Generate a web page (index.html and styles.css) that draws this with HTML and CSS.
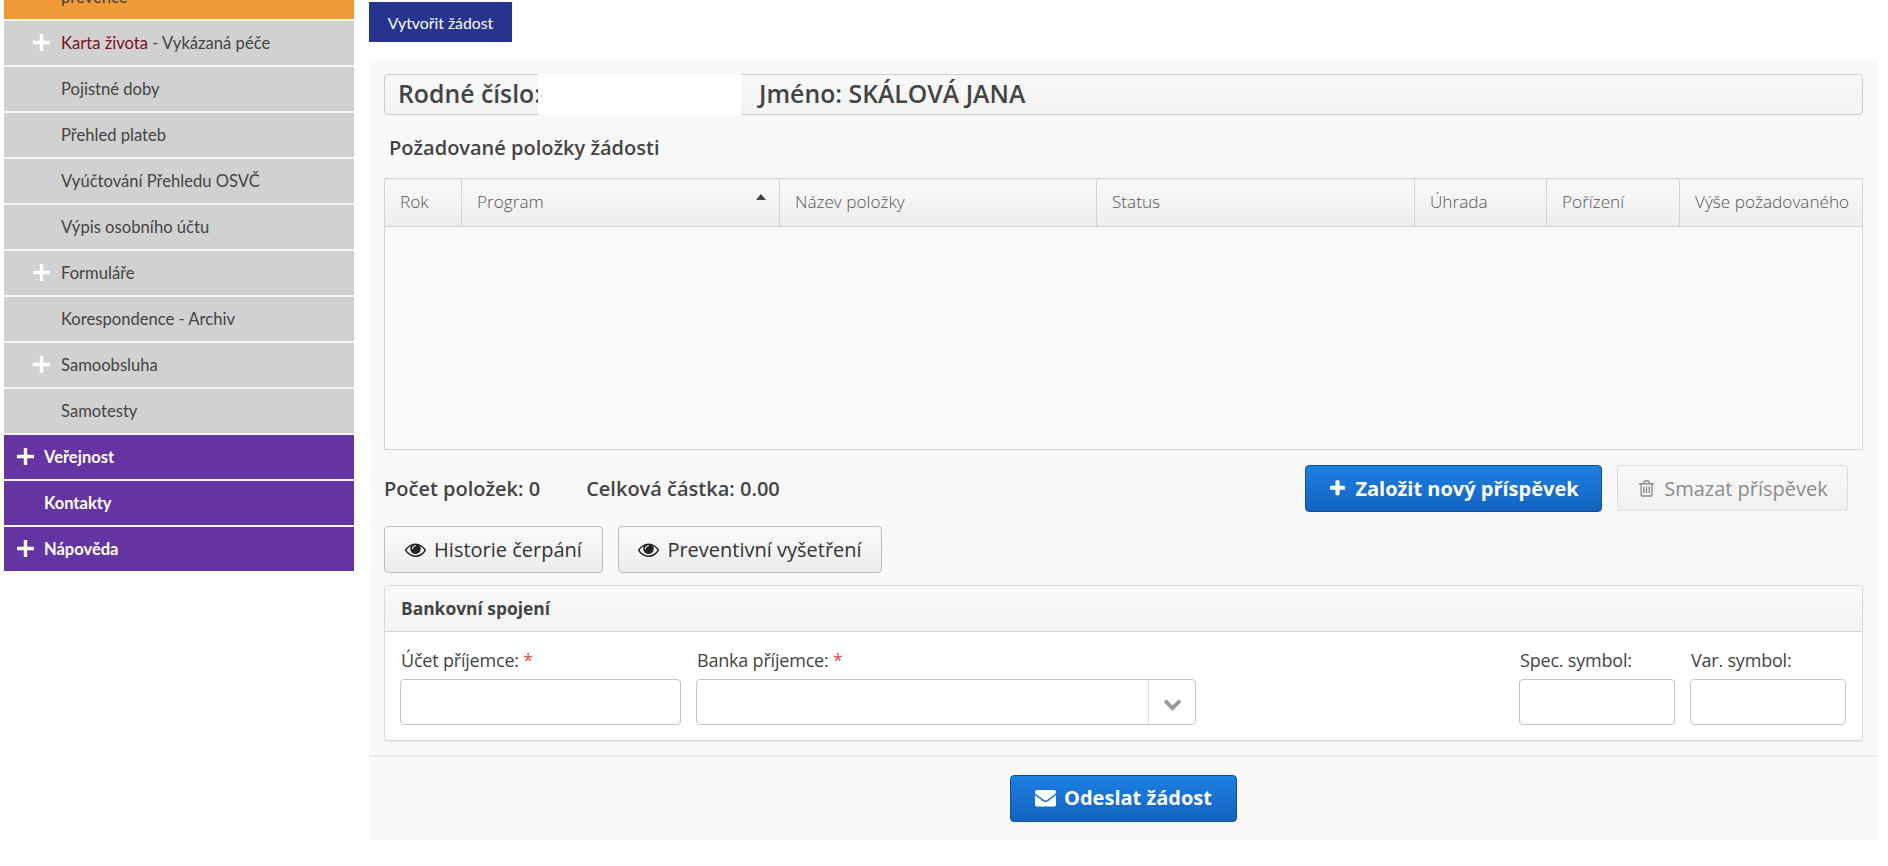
FILE: index.html
```html
<!DOCTYPE html>
<html lang="cs">
<head>
<meta charset="utf-8">
<title>Žádost</title>
<link rel="stylesheet" href="styles.css">
</head>
<body>
<div class="page">
  <nav class="side">
    <a class="item orange"><span class="label">prevence</span></a>
    <a class="item"><svg class="plus" viewBox="0 0 16 16"><path d="M6.400 0h3.200v6.400H16v3.200H9.600V16H6.400V9.600H0V6.400h6.400z"/></svg><span class="label"><span class="maroon">Karta života</span> - Vykázaná péče</span></a>
    <a class="item"><span class="label">Pojistné doby</span></a>
    <a class="item"><span class="label">Přehled plateb</span></a>
    <a class="item"><span class="label">Vyúčtování Přehledu OSVČ</span></a>
    <a class="item"><span class="label">Výpis osobního účtu</span></a>
    <a class="item"><svg class="plus" viewBox="0 0 16 16"><path d="M6.400 0h3.200v6.400H16v3.200H9.600V16H6.400V9.600H0V6.400h6.400z"/></svg><span class="label">Formuláře</span></a>
    <a class="item"><span class="label">Korespondence - Archiv</span></a>
    <a class="item"><svg class="plus" viewBox="0 0 16 16"><path d="M6.400 0h3.200v6.400H16v3.200H9.600V16H6.400V9.600H0V6.400h6.400z"/></svg><span class="label">Samoobsluha</span></a>
    <a class="item"><span class="label">Samotesty</span></a>
    <a class="item top"><svg class="plus" viewBox="0 0 16 16"><path d="M6.400 0h3.200v6.400H16v3.200H9.600V16H6.400V9.600H0V6.400h6.400z"/></svg><span class="label">Veřejnost</span></a>
    <a class="item top"><span class="label">Kontakty</span></a>
    <a class="item top"><svg class="plus" viewBox="0 0 16 16"><path d="M6.400 0h3.200v6.400H16v3.200H9.600V16H6.400V9.600H0V6.400h6.400z"/></svg><span class="label">Nápověda</span></a>
  </nav>
  <main class="main">
    <button class="create">Vytvořit žádost</button>
    <section class="panel">
      <div class="content">
        <div class="idbar">
          <span class="rc">Rodné číslo:</span>
          <span class="redact"></span>
          <span class="name">Jméno: SKÁLOVÁ JANA</span>
        </div>
        <h2 class="subtitle">Požadované položky žádosti</h2>
        <table class="grid">
          <colgroup><col class="c-rok"><col class="c-prog"><col class="c-naz"><col class="c-stat"><col class="c-uhr"><col class="c-por"><col class="c-vys"></colgroup>
          <thead>
            <tr>
              <th>Rok</th>
              <th class="sorted">Program<span class="sort"></span></th>
              <th>Název položky</th>
              <th>Status</th>
              <th>Úhrada</th>
              <th>Pořízení</th>
              <th>Výše požadovaného</th>
            </tr>
          </thead>
          <tbody><tr><td colspan="7"></td></tr></tbody>
        </table>
        <div class="summary">
          <div class="stats"><span>Počet položek: 0</span><span>Celková částka: 0.00</span></div>
          <div class="actions">
            <button class="btn primary big">
              <svg class="ic" viewBox="0 0 1792 1792"><path d="M1600 736v192q0 40-28 68t-68 28h-416v416q0 40-28 68t-68 28h-192q-40 0-68-28t-28-68v-416h-416q-40 0-68-28t-28-68v-192q0-40 28-68t68-28h416v-416q0-40 28-68t68-28h192q40 0 68 28t28 68v416h416q40 0 68 28t28 68z"/></svg>
              Založit nový příspěvek
            </button>
            <button class="btn disabled">
              <svg class="ic" viewBox="0 0 1792 1792"><path d="M704 736v576q0 14-9 23t-23 9h-64q-14 0-23-9t-9-23v-576q0-14 9-23t23-9h64q14 0 23 9t9 23zm256 0v576q0 14-9 23t-23 9h-64q-14 0-23-9t-9-23v-576q0-14 9-23t23-9h64q14 0 23 9t9 23zm256 0v576q0 14-9 23t-23 9h-64q-14 0-23-9t-9-23v-576q0-14 9-23t23-9h64q14 0 23 9t9 23zm128 724v-948h-896v948q0 22 7 40.500t14.500 27 10.500 8.500h832q3 0 10.500-8.500t14.500-27 7-40.500zm-672-1076h448l-48-117q-7-9-17-11h-317q-10 2-17 11zm928 32v64q0 14-9 23t-23 9h-96v948q0 83-47 143.500t-113 60.500h-832q-66 0-113-58.500t-47-141.500v-952h-96q-14 0-23-9t-9-23v-64q0-14 9-23t23-9h309l70-167q15-37 54-63t79-26h320q40 0 79 26t54 63l70 167h309q14 0 23 9t9 23z"/></svg>
              Smazat příspěvek
            </button>
          </div>
        </div>
        <div class="history">
          <button class="btn plain">
            <svg class="ic eye" viewBox="0 0 1792 1792"><path d="M1664 960q-152-236-381-353 61 104 61 225 0 185-131.500 316.500t-316.500 131.500-316.500-131.500-131.500-316.500q0-121 61-225-229 117-381 353 133 205 333.500 326.500t434.500 121.500 434.500-121.500 333.500-326.500zm-720-384q0-20-14-34t-34-14q-125 0-214.500 89.500t-89.500 214.500q0 20 14 34t34 14 34-14 14-34q0-86 61-147t147-61q20 0 34-14t14-34zm848 384q0 34-20 69-140 230-376.500 368.500t-499.500 138.500-499.500-139-376.500-368q-20-35-20-69t20-69q140-229 376.500-368t499.500-139 499.500 139 376.500 368q20 35 20 69z"/></svg>
            Historie čerpání
          </button>
          <button class="btn plain">
            <svg class="ic eye" viewBox="0 0 1792 1792"><path d="M1664 960q-152-236-381-353 61 104 61 225 0 185-131.500 316.500t-316.500 131.500-316.500-131.500-131.500-316.500q0-121 61-225-229 117-381 353 133 205 333.500 326.500t434.500 121.500 434.500-121.500 333.500-326.500zm-720-384q0-20-14-34t-34-14q-125 0-214.500 89.500t-89.500 214.500q0 20 14 34t34 14 34-14 14-34q0-86 61-147t147-61q20 0 34-14t14-34zm848 384q0 34-20 69-140 230-376.500 368.500t-499.500 138.500-499.500-139-376.500-368q-20-35-20-69t20-69q140-229 376.500-368t499.500-139 499.500 139 376.500 368q20 35 20 69z"/></svg>
            Preventivní vyšetření
          </button>
        </div>
        <div class="bank">
          <div class="bank-head">Bankovní spojení</div>
          <div class="bank-body">
            <label class="field f-ucet"><span class="flabel">Účet příjemce: <b class="req">*</b></span><span class="input"></span></label>
            <label class="field f-banka"><span class="flabel">Banka příjemce: <b class="req">*</b></span>
              <span class="input select"><span class="arrow"><svg viewBox="0 0 1792 1792"><path d="M1683 808l-742 741q-19 19-45 19t-45-19l-742-741q-19-19-19-45.500t19-45.500l166-165q19-19 45-19t45 19l531 531 531-531q19-19 45-19t45 19l166 165q19 19 19 45.500t-19 45.500z"/></svg></span></span>
            </label>
            <label class="field f-sym push"><span class="flabel">Spec. symbol:</span><span class="input"></span></label>
            <label class="field f-sym"><span class="flabel">Var. symbol:</span><span class="input"></span></label>
          </div>
        </div>
      </div>
      <div class="foot">
        <button class="btn primary send">
          <svg class="ic" viewBox="0 0 1792 1792"><path d="M1792 710v794q0 66-47 113t-113 47h-1472q-66 0-113-47t-47-113v-794q44 49 101 87 362 246 497 345 57 42 92.500 65.500t94.500 48 110 24.500h2q51 0 110-24.500t94.500-48 92.500-65.500q170-123 498-345 57-39 100-87zm0-294q0 79-49 151t-122 123q-376 261-468 325-10 7-42.500 30.500t-54 38-52 32.500-57.500 27-50 9h-2q-23 0-50-9t-57.500-27-52-32.500-54-38-42.500-30.500q-91-64-262-182.500t-205-142.500q-62-42-117-115.500t-55-136.500q0-78 41.500-130t118.500-52h1472q65 0 112.500 47t47.500 113z"/></svg>
          Odeslat žádost
        </button>
      </div>
    </section>
  </main>
</div>
</body>
</html>
```
FILE: styles.css
```css
* { box-sizing: border-box; }
html, body { margin: 0; padding: 0; background: #fff; height: 100%; overflow: hidden; }
body { font-family: "Open Sans", "Noto Sans", sans-serif; color: #444; }

.page { display: flex; align-items: flex-start; padding-left: 4px; }

/* Sidebar */
.side { width: 350px; flex: none; display: flex; flex-direction: column; margin-top: -25px; }
.item {
  height: 46px;
  display: flex;
  align-items: center;
  padding: 0 0 0 57px;
  background: #d1d1d1;
  border-bottom: 2px solid #f6f6f6;
  font-family: "Lato", sans-serif;
  font-size: 16.600px;
  color: #444;
  position: relative;
}
.item.orange { background: #f09a37; }
.item.top {
  background: #6534a3;
  color: #fff;
  font-weight: 700;
  padding-left: 40px;
  font-size: 16.500px;
}
.item.top:last-child { border-bottom: 0; height: 44px; }
.maroon { color: #7a0f20; }
.plus {
  width: 17px;
  height: 17px;
  fill: #fff;
  position: absolute;
  left: 29px;
  top: 13px;
}
.top .plus { left: 13px; }

/* Main */
.main { width: 1509px; margin-left: 15px; flex: none; padding-top: 2px; display: flex; flex-direction: column; align-items: flex-start; }
.create {
  width: 143px;
  height: 40px;
  padding: 0;
  border: 0;
  background: #27348f;
  color: #fff;
  font-family: "Lato", sans-serif;
  font-size: 15.800px;
}
.panel { width: 100%; margin-top: 17px; height: 781px; background: #f9f9f9; display: flex; flex-direction: column; }
.content { padding: 15px 15px 0; height: 698px; border-bottom: 2px solid #ececec; }

.idbar {
  height: 41px;
  border: 1px solid #ccc;
  border-radius: 4px;
  background: linear-gradient(#f9f9f9, #f3f3f3);
  display: flex;
  align-items: center;
  padding: 0 0 3px 13px;
  font-size: 24.800px;
  font-weight: 600;
  color: #444;
  position: relative;
}
.rc { width: 140px; white-space: nowrap; overflow: hidden; flex: none; }
.redact { width: 203px; height: 41px; background: #fff; flex: none; margin: -1px 0 -3px; align-self: flex-start; }
.name { margin-left: 18px; white-space: nowrap; }

.subtitle {
  margin: 0;
  height: 63px;
  padding: 1px 0 0 5px;
  display: flex;
  align-items: center;
  font-size: 20px;
  font-weight: 600;
  color: #444;
}

/* Table */
.grid { width: 1478px; height: 272px; table-layout: fixed; border-collapse: collapse; border: 1px solid #d5d5d5; background: #fafafa; }
.c-rok { width: 77px; }
.c-prog { width: 318px; }
.c-naz { width: 317px; }
.c-stat { width: 318px; }
.c-uhr { width: 132px; }
.c-por { width: 133px; }
.c-vys { width: 183px; }
.grid th {
  height: 48px;
  padding: 0 0 2px 15px;
  text-align: left;
  font-size: 17.200px;
  font-weight: 300;
  color: #555;
  white-space: nowrap;
  overflow: hidden;
  background: linear-gradient(#fafafa, #ededed);
  border-right: 1px solid #d5d5d5;
  border-bottom: 1px solid #d5d5d5;
  position: relative;
}
.grid th:last-child { border-right: 0; }
.sort {
  position: absolute;
  right: 13px;
  top: 15px;
  width: 0;
  height: 0;
  border-left: 5px solid transparent;
  border-right: 5px solid transparent;
  border-bottom: 6px solid #444;
}

/* Summary */
.summary { display: flex; justify-content: space-between; align-items: flex-start; height: 76px; padding-top: 15px; padding-right: 15px; }
.stats { display: flex; gap: 46px; height: 47px; align-items: center; font-size: 20px; font-weight: 600; color: #444; }
.actions { display: flex; gap: 15px; }

.btn {
  display: inline-flex;
  align-items: center;
  justify-content: center;
  gap: 8px;
  height: 47px;
  padding: 0;
  border-radius: 4px;
  font-family: "Open Sans", sans-serif;
  font-size: 20px;
  white-space: nowrap;
}
.ic { width: 20px; height: 20px; fill: currentColor; flex: none; }
.primary {
  background: linear-gradient(#1c80e2, #1462c0);
  border: 1px solid #10509f;
  color: #fff;
  font-weight: 700;
}
.big { width: 297px; }
.big .ic { width: 19px; height: 19px; }
.disabled {
  width: 231px;
  height: 46px;
  background: linear-gradient(#f9f9f9, #f1f1f1);
  border: 1px solid #ddd;
  color: #8b8b8b;
}
.disabled .ic { width: 19px; height: 19px; }
.plain {
  background: linear-gradient(#fbfbfb, #ececec);
  border: 1px solid #bdbdbd;
  color: #333;
}
.history { display: flex; gap: 15px; }
.history .plain:first-child { width: 219px; }
.history .plain:last-child { width: 264px; }
.eye { width: 21px; height: 21px; fill: #222; }

/* Bank */
.bank { margin-top: 12px; height: 156px; border: 1px solid #d9d9d9; border-radius: 4px; background: #fff; overflow: hidden; box-shadow: 0 1px 1px rgba(0,0,0,.08); }
.bank-head {
  height: 46px;
  padding: 0 0 2px 16px;
  display: flex;
  align-items: center;
  background: linear-gradient(#fafafa, #f3f3f3);
  border-bottom: 1px solid #d5d5d5;
  font-size: 17.400px;
  font-weight: 700;
  color: #444;
}
.bank-body { display: flex; gap: 15px; padding: 0 16px 0 15px; }
.field { display: flex; flex-direction: column; }
.flabel { height: 47px; padding: 14px 0 0 1px; font-size: 18px; line-height: 28px; color: #444; white-space: nowrap; letter-spacing: -0.2px; }
.req { color: #d9534f; font-weight: 400; font-size: 18px; }
.input { display: flex; justify-content: flex-end; height: 46px; border: 1px solid #c4c4c4; border-radius: 4px; background: #fff; }
.f-ucet { width: 281px; }
.f-banka { width: 500px; }
.f-sym { width: 156px; }
.push { margin-left: auto; }
.arrow { width: 47px; height: 100%; border-left: 1px solid #e0e0e0; display: flex; align-items: center; justify-content: center; }
.arrow svg { width: 19px; height: 19px; fill: #999; margin-top: 3px; }

/* Footer */
.foot { flex: 1; display: flex; justify-content: center; padding-top: 18px; }
.send { width: 227px; height: 47px; padding-bottom: 2px; }
.send .ic { width: 21px; height: 21px; }
```
